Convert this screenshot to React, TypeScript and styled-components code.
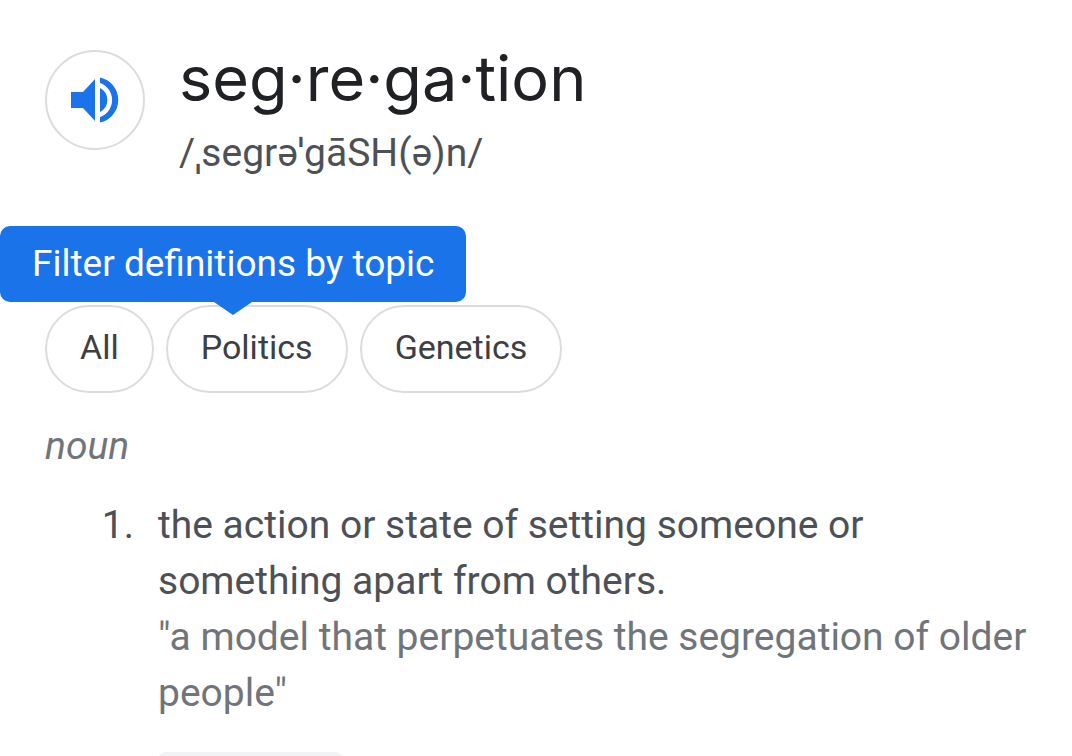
import React from "react";
import styled, { createGlobalStyle } from "styled-components";

const GlobalStyle = createGlobalStyle`
  *, *::before, *::after { box-sizing: border-box; }
  body {
    margin: 0;
    background: #fff;
    color: #4d5156;
    font-family: Roboto, "Liberation Sans", sans-serif;
  }
`;

const Page = styled.main`
  max-height: 100vh;
  overflow: hidden;
  padding: 44px 32px 0 45px;
`;

const Header = styled.header`
  display: flex;
  align-items: flex-start;
  gap: 34px;
`;

const SpeakerButton = styled.button`
  display: flex;
  flex: none;
  align-items: center;
  justify-content: center;
  width: 100px;
  height: 100px;
  margin-top: 6px;
  padding: 0;
  border: 2px solid #dadce0;
  border-radius: 50%;
  background: #fff;
`;

const Word = styled.h1`
  margin: 0;
  color: #202124;
  font-family: Inter, Roboto, sans-serif;
  font-size: 63px;
  font-weight: 400;
  line-height: 68px;
`;

const Phonetic = styled.p`
  margin: 15px 0 0;
  font-size: 39px;
  line-height: 52px;
`;

const StressMark = styled.span`
  font-family: "Noto Sans", sans-serif;
  line-height: 1;
`;

const Topics = styled.nav`
  position: relative;
  display: flex;
  gap: 12px;
  margin-top: 126px;
`;

const Topic = styled.button`
  height: 88px;
  padding: 0 33px 4px;
  border: 2px solid #dadce0;
  border-radius: 44px;
  background: #fff;
  color: #3c4043;
  font: inherit;
  font-size: 34px;
  line-height: 40px;
`;

const Tooltip = styled.div`
  position: absolute;
  bottom: 91px;
  left: -45px;
  padding: 14px 32px;
  border-radius: 10px;
  background: #1a73e8;
  color: #fff;
  font-size: 37px;
  line-height: 48px;
  white-space: nowrap;

  &::after {
    content: "";
    position: absolute;
    top: 100%;
    left: 50%;
    margin-left: -19px;
    border: 19px solid transparent;
    border-top: 13px solid #1a73e8;
    border-bottom: 0;
  }
`;

const PartOfSpeech = styled.p`
  margin: 25px 0 0;
  color: #70757a;
  font-size: 39px;
  font-style: italic;
  line-height: 56px;
`;

const Senses = styled.ol`
  margin: 23px 0 0;
  padding: 0;
  list-style: none;
  counter-reset: sense;
`;

const Sense = styled.li`
  display: grid;
  grid-template-columns: 113px 1fr;
  counter-increment: sense;
  font-size: 39px;
  line-height: 56px;

  &::before {
    content: counter(sense) ".";
    justify-self: end;
    margin-right: 24px;
  }
`;

const Definition = styled.p`
  margin: 0;
`;

const Example = styled.p`
  margin: 0;
  color: #70757a;
`;

const SimilarLabel = styled.div`
  width: 185px;
  height: 56px;
  margin-top: 31px;
  border-radius: 8px;
  background: #f1f3f4;
`;

const SpeakerIcon = () => (
  <svg width="48" height="46" viewBox="0 0 48 46" fill="#1a73e8" aria-hidden="true">
    <path d="M0 15h12L24 2v42L12 31H0z" />
    <path d="M29 11a13.500 13.500 0 0 1 0 24z" />
    <path d="M29 0.500a23 23 0 0 1 0 45v-5.500a18 18 0 0 0 0-34z" />
  </svg>
);

export default function App() {
  return (
    <>
      <GlobalStyle />
      <Page>
        <Header>
          <SpeakerButton type="button" aria-label="Listen">
            <SpeakerIcon />
          </SpeakerButton>
          <div>
            <Word>seg·re·ga·tion</Word>
            <Phonetic>
              /<StressMark>ˌ</StressMark>segrə<StressMark>ˈ</StressMark>gāSH(ə)n/
            </Phonetic>
          </div>
        </Header>
        <Topics aria-label="Topics">
          <Topic type="button">All</Topic>
          <Topic type="button">Politics</Topic>
          <Topic type="button">Genetics</Topic>
          <Tooltip role="tooltip">Filter definitions by topic</Tooltip>
        </Topics>
        <PartOfSpeech>noun</PartOfSpeech>
        <Senses>
          <Sense>
            <div>
              <Definition>the action or state of setting someone or something apart from others.</Definition>
              <Example>"a model that perpetuates the segregation of older people"</Example>
              <SimilarLabel />
            </div>
          </Sense>
        </Senses>
      </Page>
    </>
  );
}
